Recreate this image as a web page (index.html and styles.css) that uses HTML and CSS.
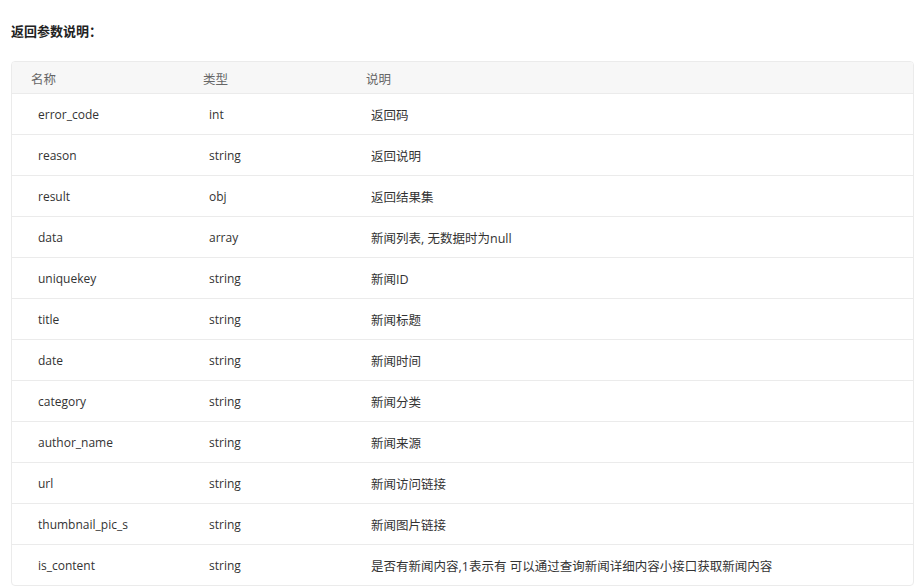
FILE: index.html
```html
<!DOCTYPE html>
<html>
<head>
<meta charset="utf-8">
<link rel="stylesheet" href="styles.css">
</head>
<body>
<div class="page">
  <h3 class="title">返回参数说明：</h3>
  <div class="table">
    <div class="row head"><div>名称</div><div>类型</div><div>说明</div></div>
    <div class="row"><div>error_code</div><div>int</div><div>返回码</div></div>
    <div class="row"><div>reason</div><div>string</div><div>返回说明</div></div>
    <div class="row"><div>result</div><div>obj</div><div>返回结果集</div></div>
    <div class="row"><div>data</div><div>array</div><div>新闻列表, 无数据时为null</div></div>
    <div class="row"><div>uniquekey</div><div>string</div><div>新闻ID</div></div>
    <div class="row"><div>title</div><div>string</div><div>新闻标题</div></div>
    <div class="row"><div>date</div><div>string</div><div>新闻时间</div></div>
    <div class="row"><div>category</div><div>string</div><div>新闻分类</div></div>
    <div class="row"><div>author_name</div><div>string</div><div>新闻来源</div></div>
    <div class="row"><div>url</div><div>string</div><div>新闻访问链接</div></div>
    <div class="row"><div>thumbnail_pic_s</div><div>string</div><div>新闻图片链接</div></div>
    <div class="row"><div>is_content</div><div>string</div><div>是否有新闻内容,1表示有 可以通过查询新闻详细内容小接口获取新闻内容</div></div>
  </div>
</div>
</body>
</html>
```
FILE: styles.css
```css
html, body { margin: 0; padding: 0; background: #fff; }
body {
  font-family: "Open Sans", "Noto Sans CJK SC", sans-serif;
  font-size: 12.5px;
  color: #333;
}
.page { padding: 0 7px 0 11px; }
.title {
  margin: 0;
  padding-top: 22px;
  height: 39px;
  font-size: 13px;
  font-weight: bold;
  color: #222;
  line-height: 18px;
}
.table {
  border: 1px solid #ebebeb;
  border-radius: 4px;
  overflow: hidden;
}
.row {
  display: grid;
  grid-template-columns: 171px 162px 1fr;
  height: 40px;
  align-items: center;
  border-top: 1px solid #ebebeb;
}
.row > div { padding-left: 26px; white-space: nowrap; }
.row > div:nth-child(-n+2) { font-size: 12px; }
.row.head {
  grid-template-columns: 172px 163px 1fr;
  height: 29px;
  padding-top: 2px;
  border-top: none;
  background: #f7f7f7;
  color: #666;
}
.row.head > div { padding-left: 19px; font-size: 12.5px; }
```
